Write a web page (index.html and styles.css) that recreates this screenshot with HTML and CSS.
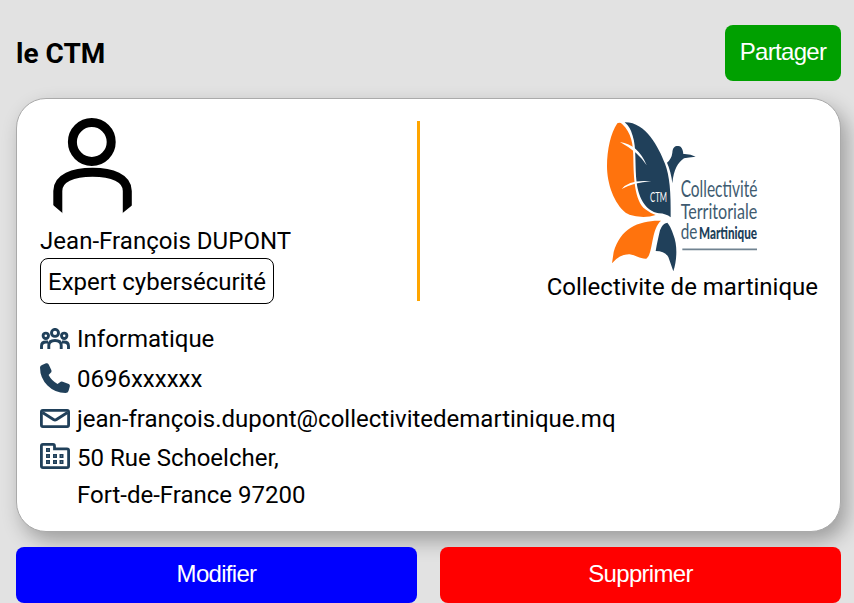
FILE: index.html
```html
<!DOCTYPE html>
<html lang="fr">
<head>
<meta charset="utf-8">
<title>le CTM</title>
<link rel="stylesheet" href="styles.css">
</head>
<body>
<header class="top">
  <h1>le CTM</h1>
  <button class="btn share">Partager</button>
</header>
<main class="card">
  <section class="summary">
    <div class="person">
      <svg class="avatar" width="80" height="96" viewBox="0 0 80 96" fill="none" stroke="#000" stroke-width="9">
        <circle cx="38.8" cy="24" r="19.4"/>
        <path d="M4.800 96V73C4.800 60 20 54.300 39.500 54.300S74.300 60 74.300 73V96"/>
        <path d="M0 87L10 95.500V96H0ZM79.500 87L69 95.500V96H79.500Z" fill="#fff" stroke="none"/>
      </svg>
      <div class="name">Jean-François DUPONT</div>
      <div class="role">Expert cybersécurité</div>
    </div>
    <div class="divider"></div>
    <div class="company">
      <svg class="logo" width="160" height="150" viewBox="30 33 480 450">
        <path fill="#ff730d" d="M82 40Q90 36 97 43C124 68 130 104 130 144C131 206 134 274 166 298Q180 309 197 315C169 325 128 321 108 309C72 281 51 221 51 169C51 119 62 70 82 40Z"/>
        <path fill="#20405a" d="M104 37C168 36 205 111 225 161C239 198 243 245 242 322Q228 311 207 310C164 303 145 258 140 218C134 169 140 113 128 77Q121 51 104 37Z"/>
        <g fill="#fff"><path d="M90 96Q145 104 170 166Q145 126 90 96Z"/><path d="M95 237Q119 207 184 214Q130 218 95 237Z"/></g>
        <path fill="#ff730d" d="M213 332C148 330 91 354 71 426L66 460Q89 432 119 433C137 435 150 447 169 446C190 432 182 359 213 332Z"/>
        <path fill="#20405a" d="M232 338Q217 340 210 361C205 382 201 401 197 423Q224 423 235 441L250 484C260 455 264 407 250 374Q241 347 232 338Z"/>
        <path fill="#20405a" d="M231 158Q245 146 247 128C248 111 256 107 265 108C276 109 279 121 280 132Q302 131 317 140Q295 142 282 145C264 157 251 178 247 220Q243 184 231 158Z"/>
        <g class="logo-text">
          <text class="mark" x="180" y="276" font-size="39" textLength="51" lengthAdjust="spacingAndGlyphs">CTM</text>
          <text x="272" y="262" font-size="68" textLength="230" lengthAdjust="spacingAndGlyphs">Collectivité</text>
          <text x="272" y="326" font-size="66" textLength="230" lengthAdjust="spacingAndGlyphs">Territoriale</text>
          <text x="272" y="388" font-size="62" textLength="50" lengthAdjust="spacingAndGlyphs">de</text>
          <text class="strong" x="327" y="387" font-size="48" textLength="174" lengthAdjust="spacingAndGlyphs">Martinique</text>
        </g>
        <path d="M277 418H501" stroke="#718391" stroke-width="5"/>
      </svg>
      <div>Collectivite de martinique</div>
    </div>
  </section>
  <ul class="details">
    <li>
      <svg width="30" height="22" viewBox="0 0 30 22" fill="none" stroke="#20405a" stroke-width="2.900">
        <circle cx="15" cy="4.900" r="3.500"/><circle cx="5.800" cy="7.800" r="2.700"/><circle cx="24.200" cy="7.800" r="2.700"/>
        <path d="M8.800 21V17.500Q8.800 12.500 15 12.500T21.200 17.500V21M1.500 21V18Q1.500 14 6 14H8M28.500 21V18Q28.500 14 24 14H22"/>
      </svg>
      <span>Informatique</span>
    </li>
    <li>
      <svg class="raised" width="30" height="30" viewBox="0 0 30 30" fill="#20405a">
        <path d="M2 2L6 .3Q8 0 8.700 1.500L11.300 7Q12 9 10.500 10L8.600 12Q11.500 17.500 17.500 21L20 19.200Q21 18.300 22.700 18.800L28.800 21Q30.200 22 29.800 23.500L28.500 28Q28 30 25.500 30Q15 30 7.500 22.500T0 4.500Q0 2.700 2 2Z"/>
      </svg>
      <span>0696xxxxxx</span>
    </li>
    <li>
      <svg class="raised" width="30" height="19" viewBox="0 0 30 19" fill="none" stroke="#20405a" stroke-width="2.800">
        <rect x="1.400" y="1.400" width="27.200" height="16.200" rx="1.500"/><path d="M2.500 3.500L13.500 10.500Q15 11.500 16.500 10.500L27.500 3.500" stroke-width="2.800"/>
      </svg>
      <span>jean-françois.dupont@collectivitedemartinique.mq</span>
    </li>
    <li class="address">
      <svg width="30" height="26" viewBox="0 0 30 26" fill="none" stroke="#20405a" stroke-width="2.800">
        <path d="M3 1.400H13Q14.500 1.400 14.500 3V5.800H27Q28.600 5.800 28.600 7.500V23Q28.600 24.600 27 24.600H3Q1.400 24.600 1.400 23V3Q1.400 1.400 3 1.400Z"/>
        <path d="M6 7H10M6 13H10M13 13H17M19.500 13H23.500M6 19H10M13 19H17M19.500 19H23.500" stroke-width="4"/>
        <path d="M7.500 7H8.500M7.500 13H8.500M14.500 13H15.500M21 13H22M7.500 19H8.500M14.500 19H15.500M21 19H22" stroke="#8396a4" stroke-width="1"/>
      </svg>
      <span>50 Rue Schoelcher,<br>Fort-de-France 97200</span>
    </li>
  </ul>
</main>
<footer class="actions">
  <button class="btn edit">Modifier</button>
  <button class="btn delete">Supprimer</button>
</footer>
</body>
</html>
```
FILE: styles.css
```css
* {
  box-sizing: border-box;
}

body {
  margin: 0;
  padding: 25px 13px 0 16px;
  height: 603px;
  overflow: hidden;
  background: #e2e2e2;
  color: #000;
  font: 24px/28px Roboto, sans-serif;
}

svg {
  display: block;
  flex: none;
}

.top {
  display: flex;
  align-items: center;
  justify-content: space-between;
  height: 56px;
}

h1 {
  margin: 2px 0 0;
  font-size: 28px;
  font-weight: 700;
}

.btn {
  height: 56px;
  padding: 0 0 2px;
  border: 0;
  border-radius: 8px;
  color: #fff;
  font: 24px "Liberation Sans", Arial, sans-serif;
  letter-spacing: -0.7px;
}

.share {
  width: 116px;
  background: #00a000;
}

.card {
  height: 434px;
  margin-top: 17px;
  padding: 19px 23px 0;
  border: 1px solid #aaa;
  border-radius: 30px;
  background: #fff;
  box-shadow: 6px 9px 20px rgba(0, 0, 0, 0.3);
}

.summary {
  display: grid;
  grid-template-columns: 377px 3px 1fr;
  height: 187px;
}

.avatar {
  margin: 0 0 13px 13px;
}

.name {
  letter-spacing: 0.04px;
}

.role {
  width: 234px;
  height: 46px;
  margin-top: 3px;
  padding-left: 7px;
  border: 1px solid #000;
  border-radius: 8px;
  line-height: 46px;
  white-space: nowrap;
}

.divider {
  height: 180px;
  margin-top: 3px;
  background: orange;
}

.company {
  display: flex;
  flex-direction: column;
  align-items: flex-end;
  padding-top: 3px;
}

.company div {
  margin-right: -1px;
}

.logo {
  margin: 0 57px 2px 0;
  overflow: visible;
}

.logo-text {
  fill: #405b70;
  font-family: Lato, sans-serif;
  font-weight: 400;
}

.logo-text .mark {
  fill: #fff;
}

.logo-text .strong {
  fill: #20405a;
  font-weight: 900;
}

.details {
  margin: 14px 0 0;
  padding: 0;
  list-style: none;
}

.details li {
  display: flex;
  align-items: center;
  gap: 7px;
  height: 40px;
}

.details .raised {
  margin-bottom: 2px;
}

.details .address {
  align-items: flex-start;
  height: 76px;
  padding-top: 4px;
  line-height: 37px;
}

.address span {
  margin-top: -3px;
}

.actions {
  display: grid;
  grid-template-columns: 1fr 1fr;
  gap: 23px;
  margin-top: 15px;
}

.edit {
  background: #00f;
}

.delete {
  background: #f00;
}
```
